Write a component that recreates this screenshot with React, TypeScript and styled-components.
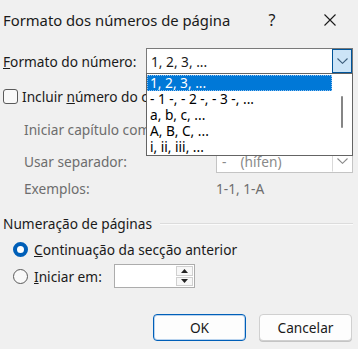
import React from "react";
import styled, { createGlobalStyle } from "styled-components";

const GlobalStyle = createGlobalStyle`
  html, body {
    margin: 0;
    padding: 0;
    background: #f0f0f0;
  }
`;

const formats = [
  "1, 2, 3, ...",
  "- 1 -, - 2 -, - 3 -, ...",
  "a, b, c, ...",
  "A, B, C, ...",
  "i, ii, iii, ...",
];

export default function App() {
  return (
    <>
      <GlobalStyle />
      <Window>
        <TitleBar>
          <Title>Formato dos números de página</Title>
          <TitleButton>?</TitleButton>
          <CloseButton>
            <svg width="12" height="12" viewBox="0 0 12 12">
              <path d="M0.5 0.5 L11.5 11.5 M11.5 0.5 L0.5 11.5" stroke="#1a1a1a" strokeWidth="1.1" />
            </svg>
          </CloseButton>
        </TitleBar>

        <Body>
          <Row $top={8} $h={26}>
            <Label $width={143}>
              <u>F</u>ormato do número:
            </Label>
            <Combo>
              <ComboText>1, 2, 3, ...</ComboText>
              <ComboButton $active>
                <Chevron color="#3b5c7a" />
              </ComboButton>
              <ListBox>
                <ListItems>
                  {formats.map((f, i) => (
                    <ListItem key={f} $selected={i === 0}>
                      {f}
                    </ListItem>
                  ))}
                </ListItems>
                <ScrollTrack>
                  <ScrollThumb />
                </ScrollTrack>
              </ListBox>
            </Combo>
          </Row>

          <Row $top={9} $h={26}>
            <CheckBox />
            <Text>
              Incluir <u>n</u>úmero do capítulo
            </Text>
          </Row>

          <Row $top={7} $h={26} $indent={21}>
            <Muted>Iniciar capítulo com o estilo</Muted>
          </Row>

          <Row $top={7} $h={24} $indent={21}>
            <Muted style={{ width: 192 }}>Usar separador:</Muted>
            <Combo $disabled>
              <SepText>
                <span>-</span>
                <span>(hífen)</span>
              </SepText>
              <ComboButton>
                <Chevron color="#8a8a8a" />
              </ComboButton>
            </Combo>
          </Row>

          <Row $top={3} $h={24} $indent={21}>
            <Muted style={{ width: 192 }}>Exemplos:</Muted>
            <Muted>1-1, 1-A</Muted>
          </Row>

          <GroupHeader>
            <Text>Numeração de páginas</Text>
            <GroupLine />
          </GroupHeader>

          <Row $top={2} $h={24} $indent={10}>
            <Radio $checked />
            <Text>
              <u>C</u>ontinuação da secção anterior
            </Text>
          </Row>

          <Row $top={3} $h={24} $indent={10}>
            <Radio />
            <Text style={{ width: 80 }}>
              <u>I</u>niciar em:
            </Text>
            <Spin>
              <SpinField />
              <SpinButtons>
                <SpinButton>
                  <svg width="7" height="4" viewBox="0 0 7 4">
                    <path d="M0 4 L3.5 0 L7 4 Z" fill="#222" />
                  </svg>
                </SpinButton>
                <SpinButton>
                  <svg width="7" height="4" viewBox="0 0 7 4">
                    <path d="M0 0 L3.5 4 L7 0 Z" fill="#222" />
                  </svg>
                </SpinButton>
              </SpinButtons>
            </Spin>
          </Row>

          <Buttons>
            <Button $default>OK</Button>
            <Button>Cancelar</Button>
          </Buttons>
        </Body>
      </Window>
    </>
  );
}

function Chevron({ color }: { color: string }) {
  return (
    <svg width="11" height="6" viewBox="0 0 11 6">
      <path d="M0.5 0.5 L5.5 5.3 L10.5 0.5" fill="none" stroke={color} strokeWidth="1.1" />
    </svg>
  );
}

const Window = styled.div`
  width: 358px;
  height: 349px;
  overflow: hidden;
  background: #f0f0f0;
  font-family: "Noto Sans", "Open Sans", sans-serif;
  font-size: 13.7px;
  color: #1a1a1a;
  box-sizing: border-box;
`;

const TitleBar = styled.div`
  height: 40px;
  display: flex;
  align-items: center;
  padding-left: 3px;
`;

const Title = styled.div`
  flex: 1;
  font-size: 14.8px;
  white-space: nowrap;
  color: #1a1a1a;
`;

const TitleButton = styled.div`
  width: 40px;
  text-align: center;
  font-size: 16px;
  margin-right: 10px;
`;

const CloseButton = styled.div`
  width: 56px;
  display: flex;
  justify-content: center;
`;

const Body = styled.div`
  padding: 0 5px 0 3px;
  display: flex;
  flex-direction: column;
`;

const Row = styled.div<{ $top: number; $h: number; $indent?: number }>`
  display: flex;
  align-items: center;
  margin-top: ${(p) => p.$top}px;
  height: ${(p) => p.$h}px;
  padding-left: ${(p) => p.$indent ?? 0}px;
  white-space: nowrap;
`;

const Label = styled.div<{ $width: number }>`
  width: ${(p) => p.$width}px;
  flex: none;
`;

const Text = styled.div`
  flex: none;
`;

const Muted = styled.div`
  flex: none;
  color: #6d6d6d;
`;

const Combo = styled.div<{ $disabled?: boolean }>`
  position: relative;
  flex: 1;
  height: 100%;
  box-sizing: border-box;
  border: 1px solid ${(p) => (p.$disabled ? "#c4c4c4" : "#7a7a7a")};
  background: #fff;
  display: flex;
  align-items: center;
`;

const ComboText = styled.div`
  flex: 1;
  padding-left: 4px;
`;

const SepText = styled.div`
  flex: 1;
  display: flex;
  gap: 14px;
  padding-left: 5px;
  color: #8a8a8a;
`;

const ComboButton = styled.div<{ $active?: boolean }>`
  width: 20px;
  align-self: stretch;
  margin: 0;
  box-sizing: border-box;
  display: flex;
  align-items: center;
  justify-content: center;
  background: ${(p) => (p.$active ? "#cce4f7" : "transparent")};
  border: 1px solid ${(p) => (p.$active ? "#005499" : "transparent")};
  border-left: 1px solid ${(p) => (p.$active ? "#005499" : "#d9d9d9")};
`;

const ListBox = styled.div`
  position: absolute;
  top: 100%;
  left: -1px;
  right: -1px;
  height: 83px;
  box-sizing: border-box;
  border: 1px solid #646464;
  background: #fff;
  display: flex;
  z-index: 2;
  overflow: hidden;
`;

const ListItems = styled.div`
  flex: 1;
  padding-top: 1px;
  display: flex;
  flex-direction: column;
`;

const ListItem = styled.div<{ $selected?: boolean }>`
  height: 16px;
  line-height: 15px;
  padding-left: 3px;
  box-sizing: border-box;
  background: ${(p) => (p.$selected ? "#0078d7" : "transparent")};
  color: ${(p) => (p.$selected ? "#fff" : "#000")};
  outline: ${(p) => (p.$selected ? "1px dotted #8fc0f0" : "none")};
  outline-offset: -1px;
`;

const ScrollTrack = styled.div`
  width: 20px;
  display: flex;
  justify-content: center;
  padding-top: 22px;
  box-sizing: border-box;
`;

const ScrollThumb = styled.div`
  width: 2px;
  height: 32px;
  border-radius: 1px;
  background: #858585;
`;

const CheckBox = styled.div`
  width: 15px;
  height: 15px;
  margin-left: 0;
  margin-right: 4px;
  box-sizing: border-box;
  border: 1px solid #5a5a5a;
  border-radius: 3px;
  background: #f9f9f9;
`;

const GroupHeader = styled.div`
  display: flex;
  align-items: center;
  height: 24px;
  margin-top: 11px;
  gap: 8px;
`;

const GroupLine = styled.div`
  flex: 1;
  height: 1px;
  background: #dcdcdc;
  border-bottom: 1px solid #fbfbfb;
  margin-top: 2px;
`;

const Radio = styled.div<{ $checked?: boolean }>`
  width: 15px;
  height: 15px;
  margin-right: 6px;
  border-radius: 50%;
  box-sizing: border-box;
  border: ${(p) => (p.$checked ? "4.5px solid #005fb8" : "1px solid #5a5a5a")};
  background: ${(p) => (p.$checked ? "#fff" : "#f9f9f9")};
`;

const Spin = styled.div`
  width: 81px;
  height: 24px;
  box-sizing: border-box;
  border: 1px solid #acacac;
  background: #fff;
  display: flex;
`;

const SpinField = styled.div`
  flex: 1;
`;

const SpinButtons = styled.div`
  width: 17px;
  padding: 1px 1px 1px 0;
  display: flex;
  flex-direction: column;
  gap: 1px;
`;

const SpinButton = styled.div`
  flex: 1;
  display: flex;
  align-items: center;
  justify-content: center;
  border: 1px solid #d0d0d0;
  background: #f7f7f7;
`;

const Buttons = styled.div`
  display: flex;
  justify-content: flex-end;
  gap: 13px;
  margin-top: 26px;
  padding-right: 1px;
`;

const Button = styled.div<{ $default?: boolean }>`
  width: 93px;
  height: 27px;
  box-sizing: border-box;
  display: flex;
  align-items: center;
  justify-content: center;
  border-radius: 4px;
  background: #fdfdfd;
  border: 1px solid ${(p) => (p.$default ? "#005fb8" : "#d0d0d0")};
  box-shadow: ${(p) => (p.$default ? "inset 0 0 0 1px #b9d3ee" : "0 1px 0 #c4c4c4")};
`;
